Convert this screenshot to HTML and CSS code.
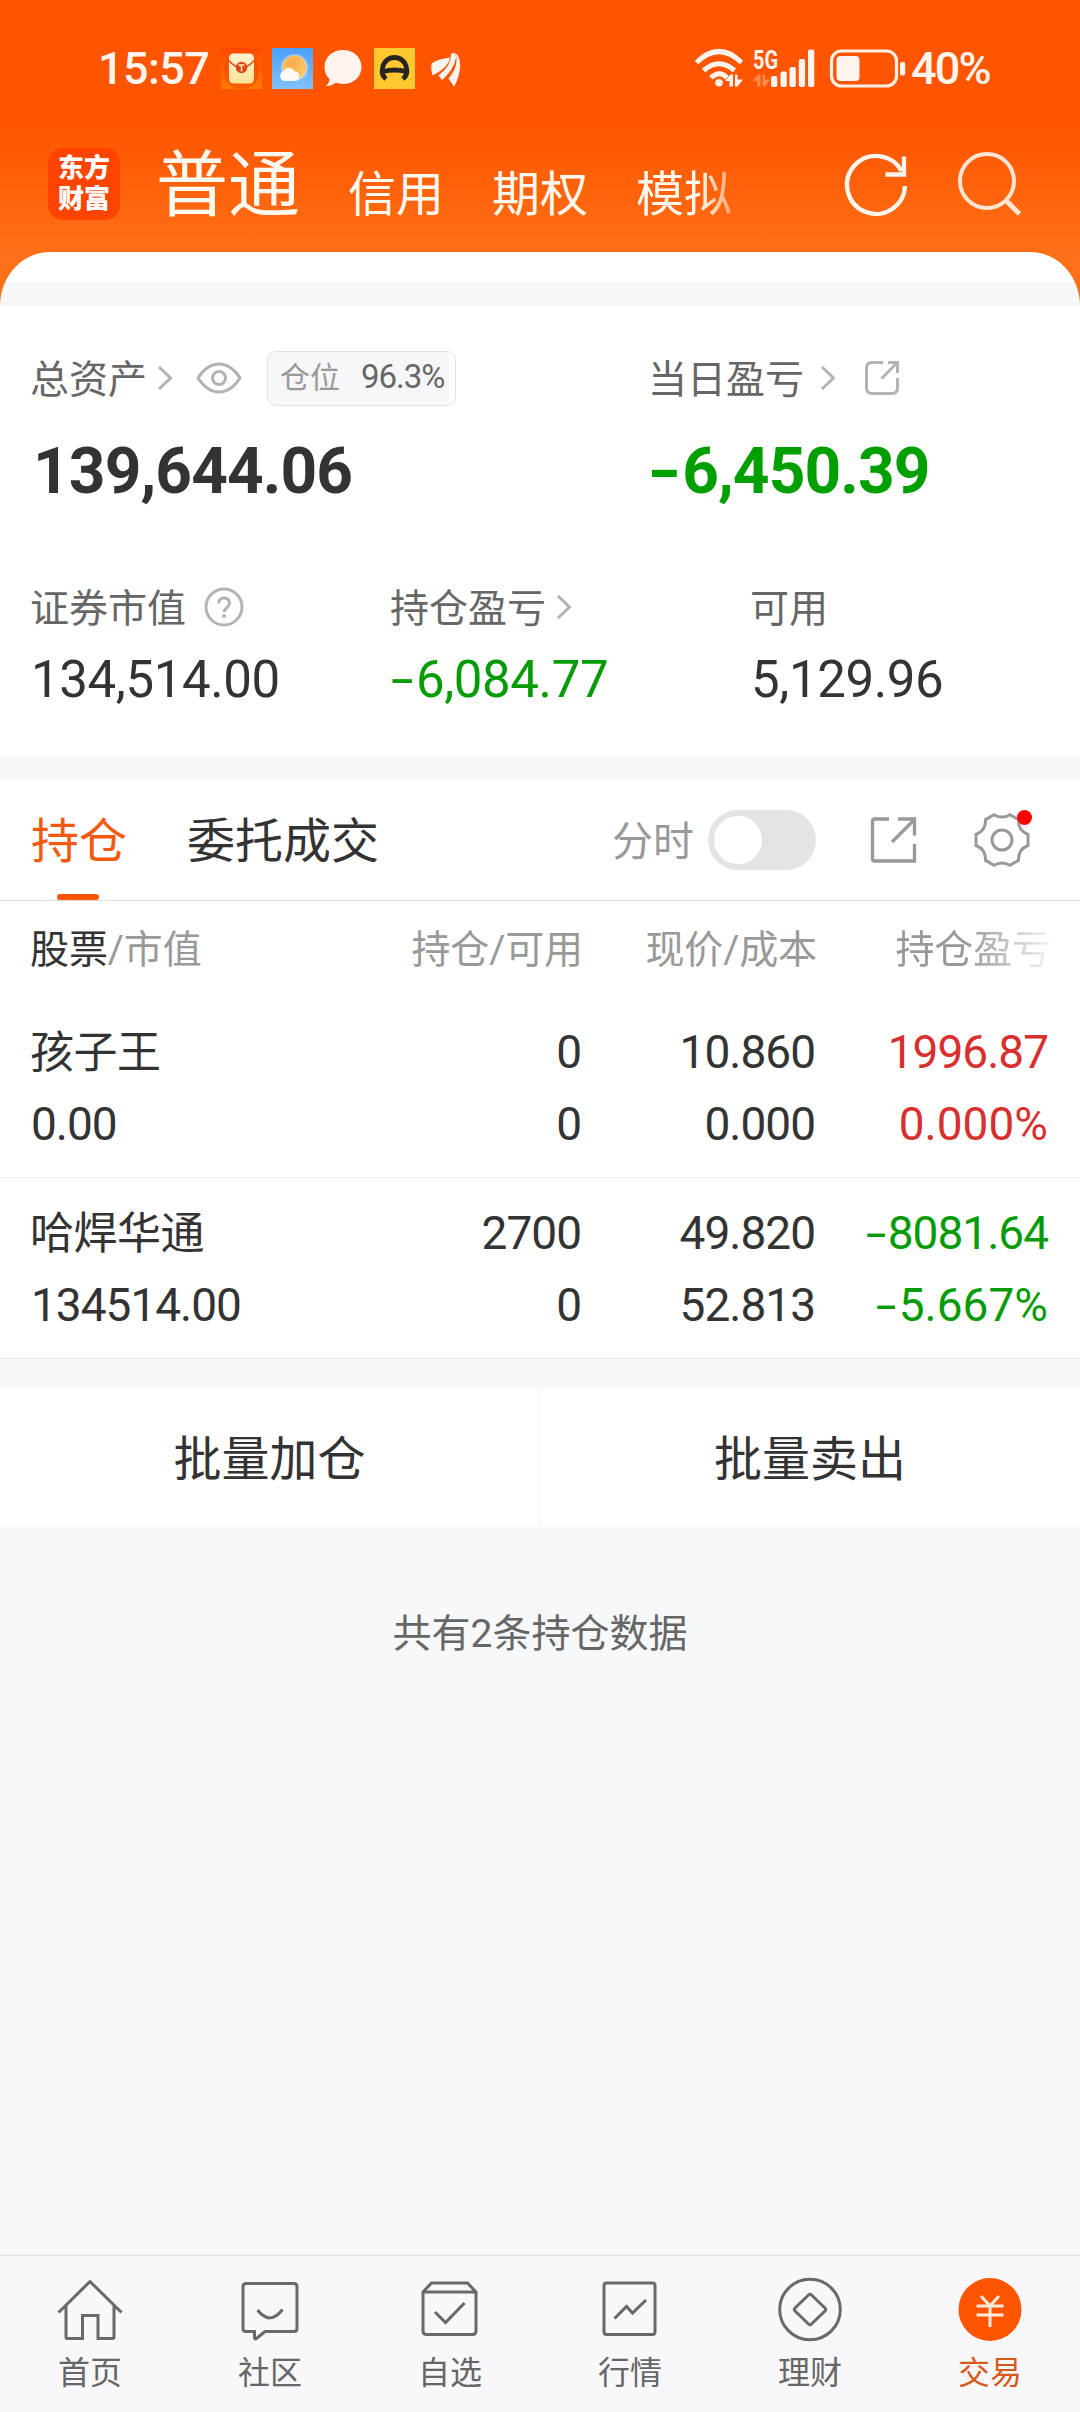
FILE: index.html
```html
<!DOCTYPE html>
<html lang="zh-CN">
<head>
<meta charset="utf-8">
<title>交易 - 持仓</title>
<link rel="stylesheet" href="styles.css">
</head>
<body>
<div class="app">
  <header class="hero">
    <div class="status">
      <span class="status-time">15:57</span>
      <div class="status-apps">
        <svg width="41" height="41" viewBox="0 0 41 41">
          <defs>
            <linearGradient id="envBg" x1="0" y1="0" x2="0" y2="1"><stop offset="0" stop-color="#ff4a00"/><stop offset="1" stop-color="#ff7a00"/></linearGradient>
            <linearGradient id="envBody" x1="0" y1="0" x2="0" y2="1"><stop offset="0" stop-color="#fff3d2"/><stop offset="1" stop-color="#ffe394"/></linearGradient>
          </defs>
          <rect width="41" height="41" fill="url(#envBg)"/>
          <circle cx="20.500" cy="23" r="18" fill="#f44700" opacity=".6"/>
          <rect x="8" y="5.500" width="25" height="30" rx="4.500" fill="url(#envBody)"/>
          <path d="M8 12.500Q13 19 20.500 20Q28 19 33 12.500" fill="none" stroke="#d8501a" stroke-width="1.500"/>
          <circle cx="20.500" cy="19.500" r="5.800" fill="#d8481a"/>
          <path d="M17.500 17h6M20.500 17v6.500" stroke="#ffe6bd" stroke-width="1.500"/>
        </svg>
        <svg width="41" height="41" viewBox="0 0 41 41">
          <defs>
            <linearGradient id="sky" x1="0" y1="0" x2="0" y2="1"><stop offset="0" stop-color="#4b9ffb"/><stop offset="1" stop-color="#82c2fb"/></linearGradient>
            <radialGradient id="sun" cx=".4" cy=".3" r=".75"><stop offset="0" stop-color="#f9a94c"/><stop offset="1" stop-color="#ffcf6a"/></radialGradient>
          </defs>
          <rect width="41" height="41" fill="url(#sky)"/>
          <circle cx="22.500" cy="19.500" r="13.500" fill="#fff" opacity=".4"/>
          <circle cx="22.500" cy="19.500" r="12" fill="url(#sun)"/>
          <path d="M13 33a5 5 0 0 1-2-9.500a6.500 6.500 0 0 1 11.500 0a4.800 4.800 0 0 1 1 9.500z" fill="#fdfaf5"/>
        </svg>
        <svg width="41" height="41" viewBox="0 0 41 41">
          <path d="M20 2C9.500 2 1.500 9 1.500 19c0 5.500 2 9.500 5 12c0 3-1.500 5-3.500 7c4 .3 7-1 9.500-3.200c2.400.7 4.900 1.200 7.500 1.200c10.500 0 18.500-7 18.500-17S30.500 2 20 2z" fill="#fff4ee"/>
        </svg>
        <svg width="41" height="41" viewBox="0 0 41 41">
          <rect width="41" height="41" fill="#ffc830"/>
          <path d="M12 31Q7 27 8.500 20C11 6 30 6 32.500 20Q34 27 29 31M9 23.500Q20.500 20.500 32 23.500" fill="none" stroke="#26251f" stroke-width="4.800"/>
        </svg>
        <svg width="41" height="41" viewBox="0 0 41 41">
          <g fill="#fff4ee">
            <path d="M6.500 15.500Q11 11.500 25 9.500Q24 19 7.500 27.500Q5.500 21 6.500 15.500z"/>
            <path d="M26 6Q31 3 31 10Q28.500 22 17 32L13.500 27.500Q27 17 26 6z"/>
            <path d="M30 4.500Q37 10 34.500 24Q32.500 33 29 38.500L23.500 30.500Q35 17 30 4.500z"/>
          </g>
        </svg>
      </div>
      <svg class="status-signal" width="210" height="41" viewBox="0 0 210 41">
        <g fill="none" stroke="#fff4ee" stroke-width="5">
          <path d="M1.500 14.500Q24 -7.500 46.500 14.500"/>
          <path d="M8.500 22.500Q24 9 39.500 22.500"/>
          <path d="M16 29.800Q24.500 21.500 32 29.800"/>
        </g>
        <circle cx="24" cy="34.800" r="3.800" fill="#fff4ee"/>
        <path d="M30 33L35.500 26.500H38V38.500H34.500V33zM40 26.500H42.500V31.500H48L42.500 38.500H40z" fill="#fff4ee"/>
        <path d="M57.500 33L63 26.500H65.500V38.500H62V33zM67.500 26.500H70V31.500H75L70 38.500H67.500z" fill="#ff8a4d"/>
        <text x="58" y="20.500" class="signal-label" textLength="25" lengthAdjust="spacingAndGlyphs">5G</text>
        <g fill="#fff4ee">
          <rect x="76" y="28" width="6.300" height="11" rx="2"/>
          <rect x="85.500" y="23.500" width="6.300" height="15.500" rx="2"/>
          <rect x="94.500" y="19" width="6.300" height="20" rx="2"/>
          <rect x="103.800" y="11" width="6.300" height="28" rx="2"/>
          <rect x="113" y="1.500" width="6.300" height="37.500" rx="2"/>
          <rect x="141.500" y="8" width="23" height="25" rx="4"/>
          <rect x="205" y="14" width="5.200" height="13.500" rx="2"/>
        </g>
        <rect x="136.500" y="3" width="65" height="35" rx="10" fill="none" stroke="#fff0e6" stroke-width="3.200"/>
      </svg>
      <span class="status-battery">40%</span>
    </div>

    <div class="topbar">
      <div class="logo"><span>东方</span><span>财富</span></div>
      <nav class="accounts">
        <span class="account account-active">普通</span>
        <span class="account">信用</span>
        <span class="account">期权</span>
        <span class="account account-fade">模拟</span>
      </nav>
      <svg class="icon-refresh" width="64" height="64" viewBox="0 0 64 64">
        <path d="M60 33A29 29 0 1 1 56.500 18M40.500 21.500H59V3.500" fill="none" stroke="#fff6ee" stroke-width="4.300"/>
      </svg>
      <svg class="icon-search" width="64" height="64" viewBox="0 0 64 64">
        <circle cx="29" cy="29" r="27" fill="none" stroke="#ffe6d2" stroke-width="4"/>
        <path d="M47.500 48L61.500 62" stroke="#ffe6d2" stroke-width="5"/>
      </svg>
    </div>
    <div class="sheet"></div>
  </header>

  <section class="assets">
    <div class="asset-main">
      <div>
        <div class="asset-label"><span class="label-text">总资产</span>
          <svg class="chev chev-a" width="16" height="26" viewBox="0 0 16 26"><path d="M2 2L13.500 13L2 24"/></svg>
          <svg class="eye" width="46" height="32" viewBox="0 0 46 32"><path d="M2 16Q11 2 23 2T44 16Q35 30 23 30T2 16z"/><circle cx="23" cy="16" r="6.500"/></svg>
          <span class="badge"><span class="badge-name">仓位</span><span class="badge-num">96.3%</span></span>
        </div>
        <div class="asset-big">139,644.06</div>
      </div>
      <div>
        <div class="asset-label"><span class="label-text">当日盈亏</span>
          <svg class="chev chev-b" width="16" height="26" viewBox="0 0 16 26"><path d="M2 2L13.500 13L2 24"/></svg>
          <svg class="share-sm" width="36" height="36" viewBox="0 0 36 36"><path d="M19 2.500H8Q2.500 2.500 2.500 8V28Q2.500 33.500 8 33.500H28Q33.500 33.500 33.500 28V18M33.500 13V2.500H24M33 3L17.500 18.500"/></svg>
        </div>
        <div class="asset-big down"><span class="minus">-</span>6,450.39</div>
      </div>
    </div>
    <div class="asset-sub">
      <div>
        <div class="asset-label"><span class="label-text">证券市值</span>
          <svg class="help" width="40" height="40" viewBox="0 0 40 40"><circle cx="20" cy="20" r="18"/><path d="M14.500 16.500Q15 11 20 11T25.500 16Q25.500 18.500 23 20.500T20 25"/><circle class="help-dot" cx="20" cy="29" r="2"/></svg>
        </div>
        <div class="asset-mid">134,514.00</div>
      </div>
      <div>
        <div class="asset-label"><span class="label-text">持仓盈亏</span>
          <svg class="chev chev-c" width="16" height="26" viewBox="0 0 16 26"><path d="M2 2L13.500 13L2 24"/></svg>
        </div>
        <div class="asset-mid down"><span class="minus">-</span>6,084.77</div>
      </div>
      <div>
        <div class="asset-label"><span class="label-text">可用</span></div>
        <div class="asset-mid">5,129.96</div>
      </div>
    </div>
  </section>

  <section class="positions">
    <div class="tabs">
      <span class="tab tab-active">持仓</span>
      <span class="tab">委托成交</span>
      <span class="tick-label">分时</span>
      <span class="switch"></span>
      <svg class="share-lg" width="48" height="48" viewBox="0 0 48 48"><path d="M19 3H4.500Q2.500 3 2.500 5V43Q2.500 45 4.500 45H44.500V28M44.500 19.500V3H28M44 4L22 26"/></svg>
      <span class="settings">
        <svg width="60" height="60" viewBox="-30 -30 60 60"><path d="M-8 -25.300Q0 -20.500 8 -25.300L16.500 -20.300Q16 -9.500 26 -5.500V5.500Q16 9.500 16.500 20.300L8 25.300Q0 20.500 -8 25.300L-16.500 20.300Q-16 9.500 -26 5.500V-5.500Q-16 -9.500 -16.500 -20.300z"/><circle r="10"/></svg>
        <i class="dot"></i>
      </span>
    </div>
    <div class="row row-head">
      <span class="c-name"><b>股票</b>/市值</span><span>持仓/可用</span><span>现价/成本</span><span class="head-fade">持仓盈亏</span>
    </div>
    <div class="row">
      <span class="c-name c-stock">孩子王</span><span>0</span><span>10.860</span><span class="up">1996.87</span>
      <span class="c-name">0.00</span><span>0</span><span>0.000</span><span class="up pct">0.000%</span>
    </div>
    <div class="row">
      <span class="c-name c-stock">哈焊华通</span><span>2700</span><span>49.820</span><span class="down"><span class="minus">-</span>8081.64</span>
      <span class="c-name">134514.00</span><span>0</span><span>52.813</span><span class="down pct"><span class="minus">-</span>5.667%</span>
    </div>
  </section>

  <div class="batch"><span>批量加仓</span><span>批量卖出</span></div>
  <p class="summary">共有2条持仓数据</p>

  <nav class="bottom">
    <span class="item"><svg width="66" height="66" viewBox="0 0 66 66"><path d="M1.500 34.500L33 3.500L64.500 34.500M9 28V59Q9 60.500 10.500 60.500H25.500V37.500H41V60.500H55.500Q57 60.500 57 59V28"/></svg>首页</span>
    <span class="item"><svg width="66" height="66" viewBox="0 0 66 66"><path d="M8 5.500H57Q60 5.500 60 8.500V50.500Q60 53.500 57 53.500H28L19.500 60.500Q18 61.500 17.500 60V53.500H9Q6 53.500 6 50.500V8.500Q6 5.500 9 5.500M20.500 32Q33 48 45.500 31.500"/></svg>社区</span>
    <span class="item"><svg width="66" height="66" viewBox="0 0 66 66"><path d="M6 14L14.500 5H50.500L59 14V53Q59 56.500 55.500 56.500H9.500Q6 56.500 6 53zM6 14H59M18 34L28.500 44.500L47.500 25"/></svg>自选</span>
    <span class="item"><svg width="66" height="66" viewBox="0 0 66 66"><rect x="7" y="5" width="51" height="51.500" rx="2.500"/><path d="M17.500 40.500L29.500 28.500L35.500 35L49 22"/></svg>行情</span>
    <span class="item"><svg width="66" height="66" viewBox="0 0 66 66"><circle cx="33" cy="31.500" r="30.300"/><path d="M31.500 17Q33 15.500 34.500 17L48 30Q49.500 31.500 48 33L34.500 46Q33 47.500 31.500 46L18 33Q16.500 31.500 18 30z"/></svg>理财</span>
    <span class="item item-active"><svg width="66" height="66" viewBox="0 0 66 66"><circle class="coin" cx="33" cy="31.500" r="31.500"/><path class="yen" d="M24 18L33 28L42 18M33 27V49M19.500 28H46.500M19.500 37H46.500"/></svg>交易</span>
  </nav>
</div>
</body>
</html>
```
FILE: styles.css
```css
* { box-sizing: border-box; }

body {
  margin: 0;
  font-family: Roboto, "Noto Sans CJK SC", sans-serif;
  color: #333;
  background: #f7f8fa;
}

svg { display: block; flex: none; overflow: visible; }

.app {
  width: 1080px;
  height: 2412px;
  display: flex;
  flex-direction: column;
  overflow: hidden;
}

/* Header */
.hero {
  height: 306px;
  flex: none;
  background: linear-gradient(#ff5500 0, #ff5500 125px, #ff7018 255px, #ff7018 100%);
}

.status {
  height: 136px;
  display: flex;
  align-items: center;
  padding-left: 98px;
  color: #fff4ee;
  font-size: 45px;
  font-weight: 500;
}
.status-time { width: 123px; letter-spacing: -0.6px; }
.status-apps { display: flex; gap: 10px; }
.status-signal { margin-left: 229px; }
.status-battery { margin-left: 6px; letter-spacing: -1.8px; }
.signal-label { font-size: 25px; font-weight: 700; fill: #fff4ee; }

.topbar {
  height: 116px;
  display: flex;
  align-items: flex-start;
  padding-left: 48px;
  color: #fffaf0;
}
.logo {
  width: 72px;
  height: 72px;
  margin-top: 12px;
  padding-top: 5px;
  display: flex;
  flex-direction: column;
  align-items: center;
  border-radius: 15px;
  background: #ff4400;
  font-size: 26px;
  font-weight: 900;
  line-height: 31px;
  color: #fff;
}
.accounts {
  width: 689px;
  padding-left: 36px;
  display: flex;
  align-items: flex-start;
  gap: 48px;
  line-height: 96px;
}
.account { margin-top: 11px; font-size: 48px; }
.account-active { margin-top: 2px; font-size: 72px; }
.account-fade {
  -webkit-mask-image: linear-gradient(90deg, #000 62px, rgba(0, 0, 0, .4) 98px);
  mask-image: linear-gradient(90deg, #000 62px, rgba(0, 0, 0, .4) 98px);
}
.icon-refresh { margin: 17px 0 0 36px; }
.icon-search { margin: 16px 0 0 49px; }

.sheet {
  height: 54px;
  border-radius: 50px 50px 0 0 / 54px 54px 0 0;
  background: linear-gradient(#fff 30px, #f7f8fa 30px);
}

/* Asset overview */
.assets {
  height: 450px;
  flex: none;
  padding: 42px 0 0 31px;
  background: #fff;
}
.asset-main { display: grid; grid-template-columns: 618px 1fr; height: 229px; }
.asset-sub { display: grid; grid-template-columns: 360px 360px 1fr; }
.asset-label {
  height: 60px;
  display: flex;
  align-items: center;
  font-size: 39px;
  color: #666;
}
.label-text { margin: -5px 1px 0 -1px; }
.asset-big {
  height: 76px;
  margin-top: 26px;
  padding-left: 2px;
  font-size: 64px;
  line-height: 76px;
  font-weight: 700;
  letter-spacing: -0.9px;
}
.asset-mid {
  margin-top: 12px;
  font-size: 51px;
  line-height: 62px;
  letter-spacing: -0.4px;
}
.down { color: #079c07; }
.up { color: #d8302e; }
.minus { display: inline-block; transform: scaleX(1.6); transform-origin: 0 50%; margin-right: .22em; }
.asset-big.down { padding-left: 0; margin-left: -2px; color: #009f00; }
.asset-big .minus { transform: scaleX(1.4); margin-right: .17em; }

.chev, .eye, .share-sm, .help { fill: none; stroke: #b3b3b3; stroke-width: 3; }
.chev-a { margin-left: 9px; }
.chev-b { margin-left: 15px; }
.chev-c { margin-left: 9px; }
.eye { margin-left: 23px; }
.share-sm { margin-left: 28px; }
.help { margin-left: 17px; }
.help-dot { fill: #b3b3b3; stroke: none; }
.badge {
  width: 189px;
  height: 55px;
  margin-left: 25px;
  padding-left: 12px;
  display: flex;
  align-items: center;
  gap: 21px;
  border: 1px solid #e2e2e5;
  border-radius: 9px;
  background: linear-gradient(90deg, #f7f7fa 181px, #fff 181px);
  font-size: 30px;
}
.badge-name { margin-top: -6px; color: #999; }
.badge-num { margin-top: -3px; font-size: 33px; letter-spacing: -1px; }

/* Positions */
.positions {
  flex: none;
  margin-top: 24px;
  background: #fff;
}
.tabs {
  height: 121px;
  padding-left: 31px;
  display: flex;
  align-items: center;
  border-bottom: 1px solid #dedede;
}
.tab {
  position: relative;
  margin: -6px 60px 0 0;
  font-size: 48px;
}
.tab-active { color: #f25a12; }
.tab-active::after {
  content: "";
  position: absolute;
  left: 26px;
  bottom: -28px;
  width: 42px;
  height: 6px;
  border-radius: 3px;
  background: #ff5500;
}
.tick-label { margin: -5px 0 0 173px; font-size: 41px; color: #999; }
.switch {
  width: 108px;
  height: 60px;
  margin-left: 14px;
  padding: 6px;
  border-radius: 30px;
  background: #e4e4e6;
}
.switch::before {
  content: "";
  display: block;
  width: 48px;
  height: 48px;
  border-radius: 50%;
  background: #fff;
}
.share-lg { margin-left: 54px; fill: none; stroke: #999; stroke-width: 3.3; }
.settings {
  position: relative;
  margin-left: 54px;
  fill: none;
  stroke: #999;
  stroke-width: 3;
}
.dot {
  position: absolute;
  top: 0;
  right: 0;
  width: 15px;
  height: 15px;
  border-radius: 50%;
  background: #f00;
}

.row {
  height: 181px;
  padding: 19px 32px 0 31px;
  display: grid;
  grid-template-columns: 250px 300px 234px 233px;
  grid-auto-rows: 72px;
  align-items: center;
  text-align: right;
  font-size: 46px;
  letter-spacing: -1px;
  border-bottom: 1px solid #ebebed;
}
.row .c-name { text-align: left; white-space: nowrap; }
.row .c-stock { margin: -6px 0 0 -1px; font-size: 44px; letter-spacing: -0.5px; }
.row .pct { letter-spacing: 0; }
.row-head {
  height: 96px;
  padding: 9px 29px 0 30px;
  grid-template-columns: 253px 300px 234px 234px;
  border: 0;
  font-size: 39px;
  letter-spacing: -0.1px;
  color: #999;
}
.row-head b { font-weight: 400; color: #333; }
.head-fade {
  -webkit-mask-image: linear-gradient(90deg, #000 150px, rgba(0, 0, 0, .1) 233px);
  mask-image: linear-gradient(90deg, #000 150px, rgba(0, 0, 0, .1) 233px);
}

/* Batch actions */
.batch {
  height: 138px;
  flex: none;
  margin-top: 30px;
  display: grid;
  grid-template-columns: 540px 540px;
  text-align: center;
  font-size: 48px;
  line-height: 141px;
  background: #fff;
}
.batch span { height: 138px; }
.batch span:first-child { border-right: 1px solid #f5f5f7; }
.summary {
  margin: 78px 0 0;
  text-align: center;
  font-size: 39px;
  line-height: 58px;
  color: #666;
}

/* Bottom navigation */
.bottom {
  height: 157px;
  flex: none;
  margin-top: auto;
  display: grid;
  grid-template-columns: repeat(6, 180px);
  border-top: 1px solid #dfe1e3;
  background: #f8f8fb;
}
.item {
  display: flex;
  flex-direction: column;
  align-items: center;
  padding-top: 22px;
  font-size: 32px;
  line-height: 58px;
  color: #666;
}
.item svg { fill: none; stroke: #696969; stroke-width: 3; }
.item-active { color: #d65a1c; }
.item .coin { fill: #ff5500; stroke: none; }
.item .yen { stroke: #ffeadb; }
```
